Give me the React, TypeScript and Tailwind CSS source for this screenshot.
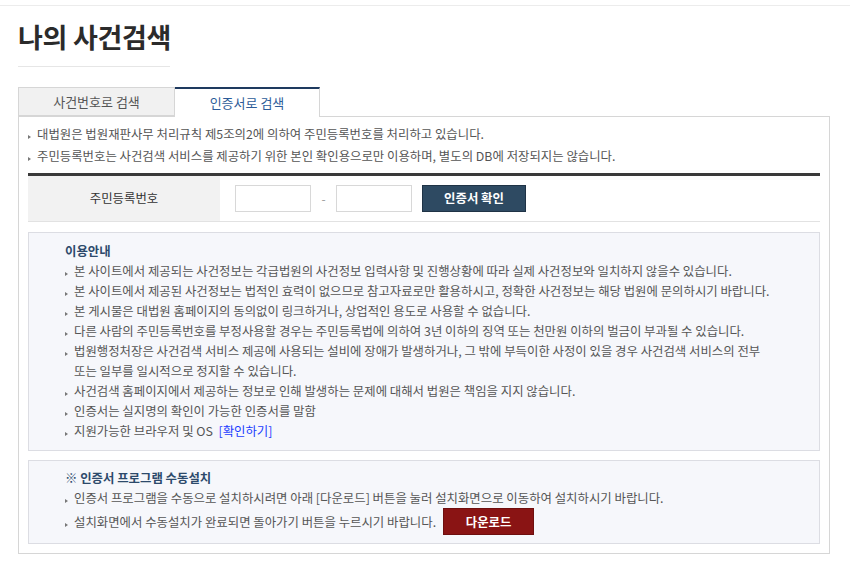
import React from 'react';

const noticeTop = [
  '대법원은 법원재판사무 처리규칙 제5조의2에 의하여 주민등록번호를 처리하고 있습니다.',
  '주민등록번호는 사건검색 서비스를 제공하기 위한 본인 확인용으로만 이용하며, 별도의 DB에 저장되지는 않습니다.',
];

const guide: React.ReactNode[] = [
  '본 사이트에서 제공되는 사건정보는 각급법원의 사건정보 입력사항 및 진행상황에 따라 실제 사건정보와 일치하지 않을수 있습니다.',
  '본 사이트에서 제공된 사건정보는 법적인 효력이 없으므로 참고자료로만 활용하시고, 정확한 사건정보는 해당 법원에 문의하시기 바랍니다.',
  '본 게시물은 대법원 홈페이지의 동의없이 링크하거나, 상업적인 용도로 사용할 수 없습니다.',
  '다른 사람의 주민등록번호를 부정사용할 경우는 주민등록법에 의하여 3년 이하의 징역 또는 천만원 이하의 벌금이 부과될 수 있습니다.',
  <>
    법원행정처장은 사건검색 서비스 제공에 사용되는 설비에 장애가 발생하거나, 그 밖에 부득이한 사정이 있을 경우 사건검색 서비스의 전부
    <br />
    또는 일부를 일시적으로 정지할 수 있습니다.
  </>,
  '사건검색 홈페이지에서 제공하는 정보로 인해 발생하는 문제에 대해서 법원은 책임을 지지 않습니다.',
  '인증서는 실지명의 확인이 가능한 인증서를 말함',
  <>
    지원가능한 브라우저 및 OS&nbsp; <span className="text-[#1a3cff]">[확인하기]</span>
  </>,
];

// tiny grey triangle used as list marker
const Bullet = ({ top }: { top: string }) => (
  <span className={`absolute left-0 ${top} w-0 h-0 border-y-[2.5px] border-y-transparent border-l-[3px] border-l-[#777]`} />
);

const Item = ({ children, top = 'top-[11px]' }: { children: React.ReactNode; top?: string }) => (
  <li className="relative pl-[9px]">
    <Bullet top={top} />
    {children}
  </li>
);

export default function App() {
  return (
    <div
      className="w-[850px] h-[579px] bg-white text-[#555] overflow-hidden"
      style={{ fontFamily: '"Noto Sans CJK KR", "Noto Sans", sans-serif' }}
    >
      <div className="h-[6px] border-b border-[#ececec]" />

      <div className="pl-[18px] pr-[20px]">
        {/* Title */}
        <div className="w-[152px] pt-[14px] pb-[12px] border-b border-[#e6e6e6]">
          <h1 className="text-[27px] leading-[34px] font-bold text-[#2b2b2b] tracking-[-0.3px] whitespace-nowrap">나의 사건검색</h1>
        </div>

        {/* Tabs */}
        <div className="flex mt-[20px] h-[29px] text-[13px]">
          <div className="w-[157px] flex items-center justify-center bg-[#f1f1f1] border border-[#d6d6d6] text-[#555]">
            사건번호로 검색
          </div>
          <div className="w-[145px] flex items-center justify-center bg-white border-t-2 border-t-[#1e3a5f] border-r border-r-[#d6d6d6] text-[#2d5c99] -mb-px relative z-10">
            인증서로 검색
          </div>
        </div>

        {/* Content box */}
        <div className="w-[812px] border border-[#d6d6d6] px-[9px] pt-[6px] pb-[9px]">
          <ul className="text-[12.4px] leading-[22px] text-[#555]">
            {noticeTop.map((t, i) => (
              <Item key={i} top="top-[12px]">{t}</Item>
            ))}
          </ul>

          {/* Form row */}
          <div className="mt-[6px] border-t-[3px] border-[#3a3a3a] border-b border-b-[#e2e2e2] flex h-[49px]">
            <div className="w-[192px] bg-[#f2f2f2] flex items-center justify-center text-[12.4px] text-[#333]">
              주민등록번호
            </div>
            <div className="flex items-center pl-[15px]">
              <input className="w-[76px] h-[27px] border border-[#d8d8d8] outline-none" />
              <span className="w-[25px] text-center text-[#999] text-[12px]">-</span>
              <input className="w-[76px] h-[27px] border border-[#d8d8d8] outline-none" />
              <button className="ml-[10px] w-[104px] h-[27px] bg-[#2e4a62] border border-[#1f3346] text-white text-[12.4px] font-bold">
                인증서 확인
              </button>
            </div>
          </div>

          {/* Guide box */}
          <div className="mt-[10px] bg-[#f6f7fb] border border-[#dcdde3] pl-[36px] pt-[8px] pb-[9px]">
            <div className="text-[12.4px] leading-[20px] font-bold text-[#2d4a6b]">이용안내</div>
            <ul className="text-[12.4px] leading-[20px] text-[#555]">
              {guide.map((t, i) => (
                <Item key={i}>{t}</Item>
              ))}
            </ul>
          </div>

          {/* Install box */}
          <div className="mt-[9px] bg-[#f6f7fb] border border-[#dcdde3] pl-[36px] pt-[7px] pb-[8px]">
            <div className="text-[12.4px] leading-[20px] font-bold text-[#2d4a6b]">※ 인증서 프로그램 수동설치</div>
            <ul className="text-[12.4px] leading-[20px] text-[#555]">
              <Item>인증서 프로그램을 수동으로 설치하시려면 아래 [다운로드] 버튼을 눌러 설치화면으로 이동하여 설치하시기 바랍니다.</Item>
              <li className="relative pl-[9px] flex items-center h-[27px]">
                <Bullet top="top-[15px]" />
                <span>설치화면에서 수동설치가 완료되면 돌아가기 버튼을 누르시기 바랍니다.</span>
                <button className="ml-[7px] w-[91px] h-[27px] bg-[#8a1414] border border-[#6e0f0f] text-white text-[12.4px] font-bold">
                  다운로드
                </button>
              </li>
            </ul>
          </div>
        </div>
      </div>
    </div>
  );
}
